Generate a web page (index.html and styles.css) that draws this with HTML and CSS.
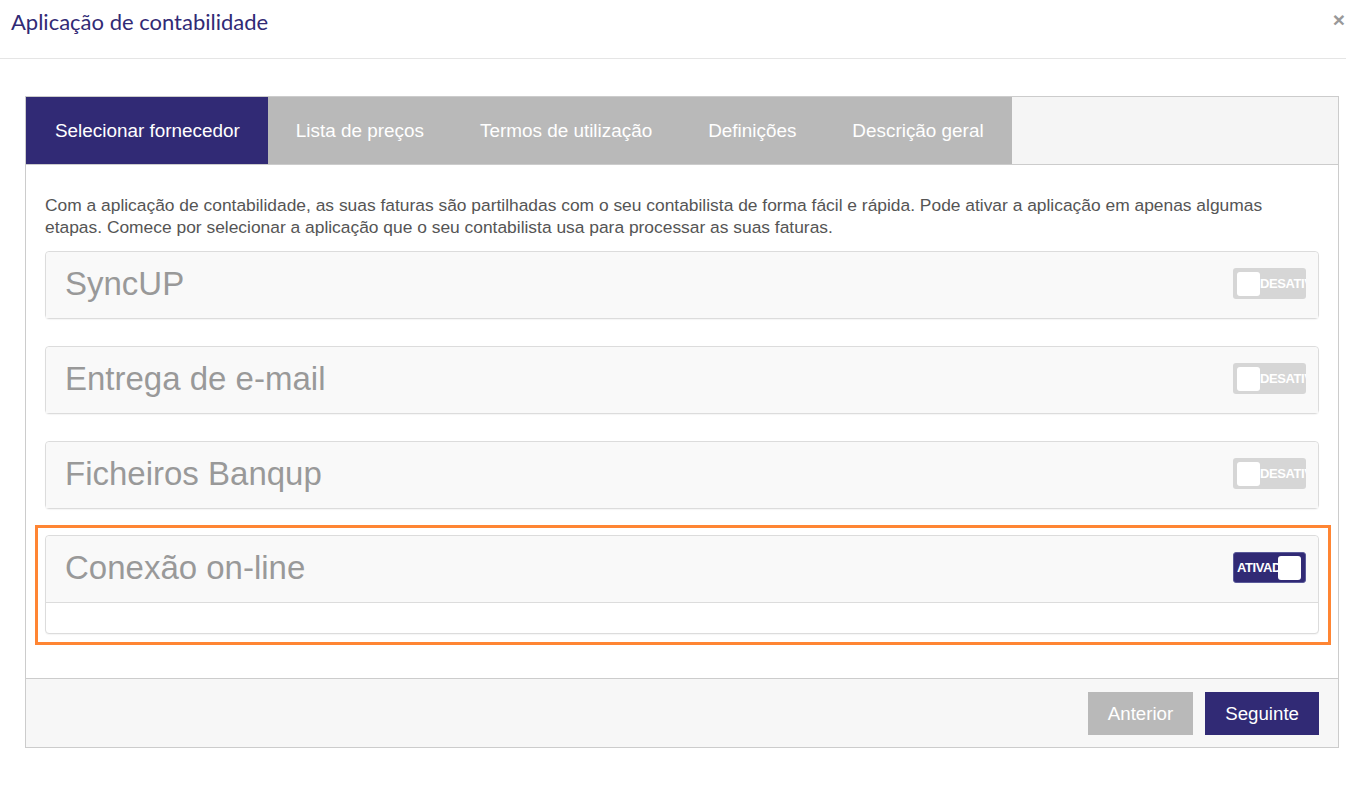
FILE: index.html
```html
<!DOCTYPE html>
<html lang="pt">
  <head>
    <meta charset="utf-8" />
    <title>Aplicação de contabilidade</title>
    <link rel="stylesheet" href="styles.css">
  </head>
  <body>
    <div class="modal">
      <div class="modal-header">
        <h1 class="modal-title">Aplicação de contabilidade</h1>
        <span class="modal-close">×</span>
      </div>
      <div class="wizard">
        <div class="tabs">
          <div class="tab tab--active">Selecionar fornecedor</div>
          <div class="tab">Lista de preços</div>
          <div class="tab">Termos de utilização</div>
          <div class="tab">Definições</div>
          <div class="tab">Descrição geral</div>
        </div>
        <div class="wizard-body">
          <p class="intro">Com a aplicação de contabilidade, as suas faturas são partilhadas com o seu contabilista de forma fácil e rápida. Pode ativar a aplicação em apenas algumas etapas. Comece por selecionar a aplicação que o seu contabilista usa para processar as suas faturas.</p>
          <div class="provider">
            <div class="provider-head">
              <span class="provider-name">SyncUP</span>
              <span class="toggle"><span class="toggle-knob"></span><span class="toggle-label">DESATIVADO</span></span>
            </div>
          </div>
          <div class="provider">
            <div class="provider-head">
              <span class="provider-name">Entrega de e-mail</span>
              <span class="toggle"><span class="toggle-knob"></span><span class="toggle-label">DESATIVADO</span></span>
            </div>
          </div>
          <div class="provider">
            <div class="provider-head">
              <span class="provider-name">Ficheiros Banqup</span>
              <span class="toggle"><span class="toggle-knob"></span><span class="toggle-label">DESATIVADO</span></span>
            </div>
          </div>
          <div class="highlight">
            <div class="provider">
              <div class="provider-head">
                <span class="provider-name">Conexão on-line</span>
                <span class="toggle toggle--on"><span class="toggle-label">ATIVADO</span><span class="toggle-knob"></span></span>
              </div>
              <div class="provider-body"></div>
            </div>
          </div>
        </div>
        <div class="wizard-footer">
          <button class="btn btn--muted">Anterior</button>
          <button class="btn btn--primary">Seguinte</button>
        </div>
      </div>
    </div>
  </body>
</html>
```

FILE: styles.css
```css
:root {
  --color-indigo: rgb(49, 42, 117);
  --color-grey-tab: rgb(185, 185, 185);
  --color-border: rgb(204, 204, 204);
  --color-highlight: rgb(255, 133, 51);
}

* {
  box-sizing: border-box;
}

body {
  margin: 0;
  background: #fff;
  font-family: "Liberation Sans", Arial, sans-serif;
  overflow: hidden;
}

.modal-header {
  height: 59px;
  border-bottom: 1px solid #e5e5e5;
  display: flex;
  align-items: flex-start;
  justify-content: space-between;
  padding: 8px 0 0 11px;
}
.modal-title {
  margin: 0;
  font-family: Lato, sans-serif;
  font-weight: 400;
  font-size: 22px;
  line-height: 28px;
  color: var(--color-indigo);
}
.modal-close {
  font-size: 21px;
  font-weight: 700;
  line-height: 22px;
  color: #999;
  margin-top: 1px;
  margin-right: 1px;
}

.wizard {
  margin: 37px 7px 0 25px;
  border: 1px solid var(--color-border);
}

.tabs {
  display: flex;
  height: 68px;
  background: #f5f5f5;
  border-bottom: 1px solid var(--color-border);
}
.tab {
  display: flex;
  align-items: center;
  padding: 0 28px;
  background: var(--color-grey-tab);
  color: #fff;
  font-size: 18.9px;
}
.tab--active {
  background: var(--color-indigo);
  padding: 0 28px 0 29px;
}

.wizard-body {
  padding: 29px 19px 33px 19px;
}
.intro {
  margin: 0 0 13px;
  font-size: 17.4px;
  line-height: 22px;
  color: #555;
}

.provider {
  border: 1px solid #dcdcdc;
  border-radius: 4px;
  background: #fff;
  margin-bottom: 27px;
  box-shadow: 0 1px 1px rgba(0, 0, 0, 0.04);
}
.highlight {
  margin: -11px -12px 0 -10px;
  padding: 7px 9px 8px 7px;
  border: 3px solid var(--color-highlight);
}
.highlight .provider {
  margin-bottom: 0;
}
.provider-head {
  height: 66px;
  display: flex;
  align-items: center;
  justify-content: space-between;
  padding: 0 12px 0 19px;
  background: #f9f9f9;
  border-radius: 4px 4px 0 0;
}
.provider-name {
  font-size: 33px;
  color: #999;
  margin-top: -2px;
}
.provider-body {
  height: 31px;
  border-top: 1px solid #dcdcdc;
}

.toggle {
  width: 73px;
  height: 31px;
  border-radius: 3px;
  background: #d6d6d6;
  display: flex;
  align-items: center;
  padding: 0 4px;
  overflow: hidden;
  margin-top: -3px;
}
.toggle-knob {
  flex: none;
  width: 23px;
  height: 24px;
  background: #fff;
  border-radius: 3px;
}
.toggle-label {
  flex: none;
  font-size: 13px;
  font-weight: 700;
  color: #fff;
  letter-spacing: -0.4px;
}
.toggle--on {
  background: var(--color-indigo);
  border: 1px solid #5a5a9a;
  padding: 0 3px;
}
.toggle--on .toggle-label {
  width: 41px;
  overflow: hidden;
}

.wizard-footer {
  display: flex;
  justify-content: flex-end;
  gap: 12px;
  padding: 13px 19px 12px;
  border-top: 1px solid var(--color-border);
  background: #f7f7f7;
}
.btn {
  height: 43px;
  border: 0;
  font-family: "Liberation Sans", Arial, sans-serif;
  font-size: 18.7px;
  color: #fff;
  padding: 0 20px;
}
.btn--muted {
  background: var(--color-grey-tab);
}
.btn--primary {
  background: var(--color-indigo);
}
```
